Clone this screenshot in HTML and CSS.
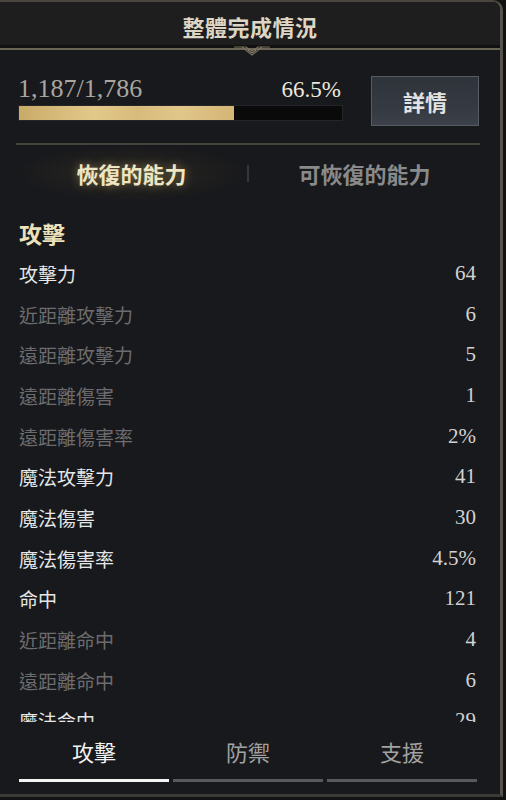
FILE: index.html
```html
<!DOCTYPE html>
<html lang="zh-Hant">
<head>
<meta charset="utf-8">
<link rel="stylesheet" href="styles.css">
</head>
<body>
<div class="panel">
  <header class="head">
    <h1 class="title">整體完成情況</h1>
    <svg class="ornament" width="60" height="12" viewBox="0 0 60 12">
      <path d="M12 1 L24 1 L30 5 L36 1 L48 1" fill="none" stroke="#7a725f" stroke-width="1.2"/>
      <path d="M20 1 L30 9 L40 1" fill="none" stroke="#7a725f" stroke-width="1.2"/>
      <path d="M26 4 L30 7 L34 4" fill="none" stroke="#a39a80" stroke-width="1"/>
    </svg>
  </header>

  <section class="progress">
    <div class="prog-main">
      <div class="prog-nums">
        <span class="count">1,187/1,786</span>
        <span class="pct">66.5%</span>
      </div>
      <div class="bar"><div class="fill" style="width:66.5%"></div></div>
    </div>
    <button class="detail">詳情</button>
  </section>

  <div class="divider"></div>

  <nav class="toggle">
    <div class="tog active">恢復的能力</div>
    <div class="tog-sep"></div>
    <div class="tog">可恢復的能力</div>
  </nav>

  <div class="list">
    <div class="sec">攻擊</div>
    <div class="row on"><span class="lbl">攻擊力</span><span class="val">64</span></div>
    <div class="row"><span class="lbl">近距離攻擊力</span><span class="val">6</span></div>
    <div class="row"><span class="lbl">遠距離攻擊力</span><span class="val">5</span></div>
    <div class="row"><span class="lbl">遠距離傷害</span><span class="val">1</span></div>
    <div class="row"><span class="lbl">遠距離傷害率</span><span class="val">2%</span></div>
    <div class="row on"><span class="lbl">魔法攻擊力</span><span class="val">41</span></div>
    <div class="row on"><span class="lbl">魔法傷害</span><span class="val">30</span></div>
    <div class="row on"><span class="lbl">魔法傷害率</span><span class="val">4.5%</span></div>
    <div class="row on"><span class="lbl">命中</span><span class="val">121</span></div>
    <div class="row"><span class="lbl">近距離命中</span><span class="val">4</span></div>
    <div class="row"><span class="lbl">遠距離命中</span><span class="val">6</span></div>
    <div class="row on"><span class="lbl">魔法命中</span><span class="val">29</span></div>
  </div>

  <nav class="tabs">
    <div class="tab active">攻擊</div>
    <div class="tab">防禦</div>
    <div class="tab">支援</div>
  </nav>
</div>
</body>
</html>
```

FILE: styles.css
```css
* { box-sizing: border-box; }
html, body { margin: 0; padding: 0; }
body {
  width: 506px;
  height: 800px;
  background: #121212;
  font-family: "Noto Sans CJK TC", "Noto Sans", sans-serif;
  overflow: hidden;
}
.panel {
  width: 503px;
  height: 797px;
  background: #18191c;
  border-top: 2px solid #4a463f;
  border-right: 3px solid #57524b;
  border-bottom: 3px solid #3c3a37;
  border-top-right-radius: 10px;
  display: flex;
  flex-direction: column;
  overflow: hidden;
}
.head {
  position: relative;
  height: 48px;
  flex: none;
  background: #1e1e1f;
  border-bottom: 2px solid #6a6455;
  box-shadow: inset 0 -3px 0 #111;
  display: flex;
  align-items: center;
  justify-content: center;
  padding-top: 1px;
}
.title {
  margin: 0;
  font-size: 22px;
  font-weight: 700;
  color: #ddd6c4;
  letter-spacing: 0.5px;
  line-height: 1;
}
.ornament {
  position: absolute;
  left: 222px;
  bottom: -10px;
}
.progress {
  height: 93px;
  flex: none;
  display: flex;
  align-items: flex-start;
  padding: 26px 0 0 18px;
}
.prog-main {
  width: 325px;
}
.prog-nums {
  display: flex;
  justify-content: space-between;
  align-items: baseline;
  font-family: "Liberation Serif", serif;
  height: 28px;
}
.count {
  font-size: 26px;
  color: #aaa6a0;
  line-height: 1;
}
.pct {
  font-size: 23px;
  color: #ebe7df;
  line-height: 1;
  padding-right: 2px;
}
.bar {
  margin-top: 1px;
  height: 16px;
  background: #0a0a0b;
  border: 1px solid #26262a;
}
.fill {
  height: 100%;
  background: linear-gradient(90deg, #c9ab68 0%, #e2c88a 35%, #d7bb7c 55%, #e1c68a 75%, #d4b676 100%);
}
.detail {
  margin-left: 28px;
  margin-top: 0;
  width: 108px;
  height: 50px;
  background: linear-gradient(180deg, #2f343b 0%, #363b43 70%, #3d424a 100%);
  border: 1px solid #565c65;
  color: #e2e2e2;
  font-family: "Noto Sans CJK TC", sans-serif;
  font-size: 22px;
  font-weight: 700;
  padding: 0;
}
.divider {
  flex: none;
  margin: 0 20px 0 16px;
  height: 2px;
  background: #45423d;
}
.toggle {
  flex: none;
  height: 56px;
  display: flex;
  align-items: center;
  padding: 0 20px 0 16px;
}
.tog {
  flex: 1;
  text-align: center;
  font-size: 22px;
  font-weight: 700;
  color: #8a8a8a;
  line-height: 1;
}
.tog.active {
  color: #eee5c2;
  text-shadow: 0 0 10px rgba(220, 190, 110, 0.5);
  background: radial-gradient(ellipse 50% 50% at 50% 50%, rgba(120, 100, 60, 0.2), rgba(0,0,0,0) 100%);
  padding: 17px 0;
}
.tog-sep {
  width: 2px;
  height: 17px;
  background: #35363a;
}
.list {
  flex: none;
  height: 521px;
  overflow: hidden;
  padding: 0 24px 0 19px;
}
.sec {
  height: 52px;
  display: flex;
  align-items: center;
  font-size: 23px;
  font-weight: 700;
  color: #ece1b9;
  padding-top: 12px;
}
.row {
  height: 40.7px;
  display: flex;
  align-items: center;
  justify-content: space-between;
}
.lbl {
  font-size: 19px;
  color: #6c6c6e;
  line-height: 1;
}
.row.on .lbl { color: #e6e6e6; }
.val {
  font-family: "Liberation Serif", serif;
  font-size: 21px;
  color: #d2d2d2;
  line-height: 1;
}
.tabs {
  flex: 1;
  display: flex;
  gap: 4px;
  padding: 0 23px 0 19px;
}
.tab {
  flex: 1;
  display: flex;
  align-items: center;
  justify-content: center;
  font-size: 22px;
  color: #a2a2a2;
  border-bottom: 3px solid #58595c;
  height: 60px;
}
.tab.active {
  color: #f2f2f2;
  border-bottom-color: #f4f4f4;
}
```
